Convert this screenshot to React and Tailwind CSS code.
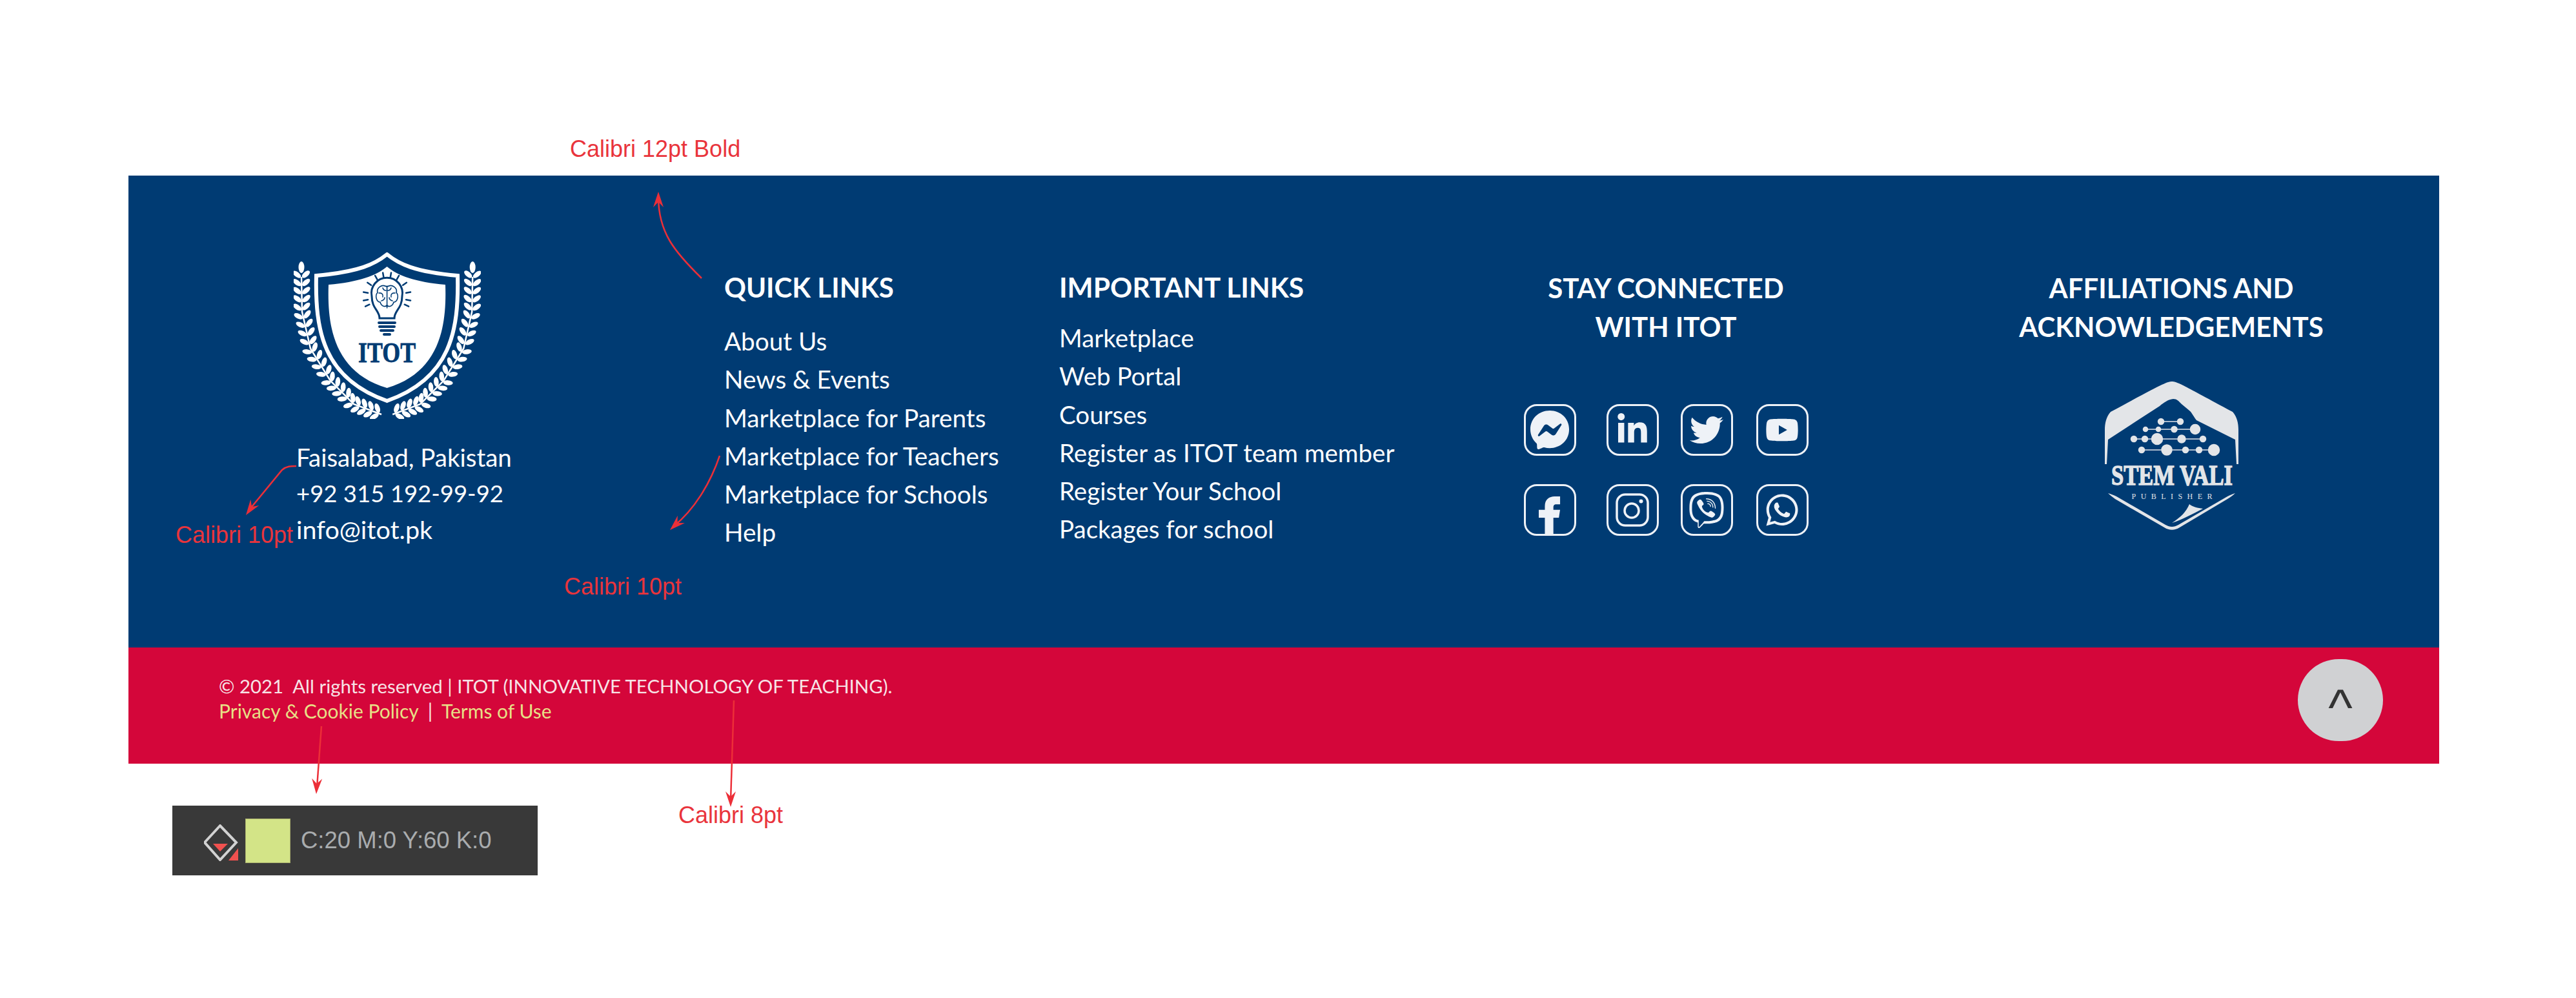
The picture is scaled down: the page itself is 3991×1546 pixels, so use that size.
import React from 'react';
import { FaFacebookMessenger, FaLinkedinIn, FaTwitter, FaYoutube, FaViber, FaWhatsapp } from 'react-icons/fa';

const quickLinks = ['About Us', 'News & Events', 'Marketplace for Parents', 'Marketplace for Teachers', 'Marketplace for Schools', 'Help'];
const importantLinks = ['Marketplace', 'Web Portal', 'Courses', 'Register as ITOT team member', 'Register Your School', 'Packages for school'];

// leaves of one laurel branch, sampled along the stem
const stem = [[12, 38], [13, 92], [26, 149], [57, 199], [93, 235], [136, 251]];
const pointOn = (t) => {
  const s = t * (stem.length - 1);
  const i = Math.min(Math.floor(s), stem.length - 2);
  const f = s - i;
  return [stem[i][0] + (stem[i + 1][0] - stem[i][0]) * f, stem[i][1] + (stem[i + 1][1] - stem[i][1]) * f];
};
const leaves = [];
for (let n = 0; n < 22; n++) {
  const t = n / 21.5;
  const [x, y] = pointOn(t);
  const [x2, y2] = pointOn(Math.min(t + 0.02, 1));
  const a = (Math.atan2(y2 - y, x2 - x) * 180) / Math.PI;
  leaves.push({ x, y, a });
}

const Laurel = () => (
  <g fill="white">
    <path d="M12 38 L13 92 L26 149 L57 199 L93 235 L136 251" fill="none" stroke="white" strokeWidth="2.5" />
    <ellipse cx="12" cy="23" rx="4.5" ry="9" />
    {leaves.map((l, i) => (
      <g key={i} transform={`translate(${l.x} ${l.y}) rotate(${l.a})`}>
        <ellipse cx="-4" cy="-7" rx="7.5" ry="3.8" transform="rotate(50 -4 -7)" />
        <ellipse cx="-4" cy="7" rx="7.5" ry="3.8" transform="rotate(-50 -4 7)" />
      </g>
    ))}
  </g>
);

const rays = [-170, -145, -120, -100, -80, -60, -35, -10, 10, 170, 25, 155];

const ItotLogo = () => (
  <svg width="290" height="258" viewBox="0 0 290 258" className="block">
    <Laurel />
    <g transform="translate(289.2 0) scale(-1 1)">
      <Laurel />
    </g>
    <path d="M144.6 3 C126 18 102 30 35 36 C33 120 45 195 144.6 230 C244 195 256 120 254 36 C187 30 163 18 144.6 3 Z" fill="none" stroke="white" strokeWidth="6" />
    <path d="M144.6 22 C128 36 100 46 54 50 C52 110 60 185 144.6 210 C229 185 237 110 235 50 C189 46 161 36 144.6 22 Z" fill="white" />
    {/* bulb */}
    <g fill="none" stroke="#003b73" strokeLinecap="round">
      <path d="M133 102 C133 90 121 87 121 68 A24 24 0 1 1 168 68 C168 87 156 90 156 102 Z" strokeWidth="3" />
      <path d="M132 109 H157 M133 115 H156 M135 121 H154" strokeWidth="4" />
      <path d="M140 127 H149" strokeWidth="4" />
      {rays.map((r) => (
        <line key={r} x1={144.6 + 30 * Math.cos((r * Math.PI) / 180)} y1={68 + 30 * Math.sin((r * Math.PI) / 180)} x2={144.6 + 37 * Math.cos((r * Math.PI) / 180)} y2={68 + 37 * Math.sin((r * Math.PI) / 180)} strokeWidth="2.5" />
      ))}
      <path d="M144.6 52 V86 M144 53 C136 48 128 56 130 62 C125 68 129 77 134 77 C136 84 142 85 144 82 M145 53 C153 48 161 56 159 62 C164 68 160 77 155 77 C153 84 147 85 145 82 M132 63 C137 62 139 66 138 69 M157 63 C152 62 150 66 151 69 M136 75 C139 74 141 72 141 70 M153 75 C150 74 148 72 148 70 M138 55 C139 58 141 59 143 59 M151 55 C150 58 148 59 146 59" strokeWidth="1.6" />
    </g>
    <text x="144.6" y="170" textAnchor="middle" textLength="89" lengthAdjust="spacingAndGlyphs" fill="#003b73" stroke="#003b73" strokeWidth="0.8" fontFamily="Liberation Serif" fontWeight="700" fontSize="44">ITOT</text>
  </svg>
);

const StemLogo = () => (
  <svg width="207" height="232" viewBox="0 0 207 232" className="block">
    <path d="M104 0 C112 0 120 5 198 47 C205 55 207 65 207 75 L207 128 L204 128 L202 90 L142 60 C136 52 134 47 131 45 L119 35 C114 30 112 27 106 27 C98 28 92 32 85 38 L54 58 L5 90 L3 128 L0 128 L0 75 C0 65 2 55 9 47 C87 5 96 0 104 0 Z" fill="#e3e5e8" />
    <g fill="#e3e5e8" stroke="#e3e5e8" strokeWidth="1.5">
      <line x1="87" y1="62" x2="117" y2="62" />
      <line x1="63" y1="74" x2="140" y2="74" />
      <line x1="45" y1="89" x2="152" y2="89" />
      <line x1="57" y1="106" x2="169" y2="106" />
      <circle cx="87" cy="62" r="4.5" />
      <circle cx="117" cy="62" r="4.5" />
      <circle cx="63" cy="74" r="3.5" />
      <circle cx="83" cy="74" r="3.5" />
      <circle cx="107.5" cy="74" r="4.5" />
      <circle cx="140" cy="74" r="7.5" />
      <circle cx="45" cy="89" r="4.5" />
      <circle cx="62" cy="89" r="4.5" />
      <circle cx="81" cy="89" r="8.5" />
      <circle cx="119" cy="89" r="6" />
      <circle cx="152" cy="89" r="4.5" />
      <circle cx="57" cy="106" r="4.5" />
      <circle cx="96" cy="106" r="8" />
      <circle cx="125" cy="106" r="4.5" />
      <circle cx="146" cy="106" r="4.5" />
      <circle cx="169" cy="106" r="8.5" />
    </g>
    <text transform="translate(104 160) scale(1 1.4)" textAnchor="middle" textLength="188" lengthAdjust="spacingAndGlyphs" fill="#e3e5e8" stroke="#e3e5e8" strokeWidth="1" fontFamily="Liberation Serif" fontWeight="700" fontSize="31">STEM VALI</text>
    <text x="104" y="182" textAnchor="middle" textLength="125" lengthAdjust="spacing" fill="#e3e5e8" fontFamily="Liberation Serif" fontSize="12">PUBLISHER</text>
    <path d="M5 173 C8 176 12 179 16 182 L92 226 C100 231 108 231 116 226 L190 182 C195 179 199 176 202 173 C198 174 194 176 190 178 L114 222 C107 226 101 226 94 222 L18 178 C14 176 9 174 5 173 Z" fill="#e3e5e8" />
    <path d="M104 219 C118 210 126 202 131 190 C136 194 144 196 152 197 C138 204 120 214 104 219 Z" fill="#e3e5e8" />
  </svg>
);

const Social = ({ children }) => (
  <div className="w-[81px] h-[80px] rounded-[20px] border-[3.5px] border-[#eef2f7] text-[#eef2f7] overflow-hidden flex items-center justify-center">
    {children}
  </div>
);

const head = (tipX, tipY, fromX, fromY) => {
  const a = Math.atan2(tipY - fromY, tipX - fromX);
  const p = (d, s) => `${tipX - d * Math.cos(a) - s * Math.sin(a)},${tipY - d * Math.sin(a) + s * Math.cos(a)}`;
  return [p(24, 8), p(16, 0), p(24, -8), `${tipX},${tipY}`].join(' ');
};

const Annotations = () => (
  <svg width="3991" height="1546" viewBox="0 0 3991 1546" className="absolute inset-0 pointer-events-none">
    <g fill="none" stroke="#ec2f38" strokeWidth="2.5">
      <path d="M1087 431 C1045 390 1020 360 1020 305" />
      <path d="M1115 706 C1100 750 1075 790 1044 815" />
      <path d="M459 722 C450 722 444 722 437 728 L386 790" />
      <path d="M498 1125 L491 1220" />
      <path d="M1137 1085 L1132 1240" />
    </g>
    <g fill="#ec2f38">
      <polygon points={head(1020, 297, 1020, 330)} />
      <polygon points={head(1038, 821, 1060, 800)} />
      <polygon points={head(381, 798, 395, 778)} />
      <polygon points={head(490, 1230, 491, 1210)} />
      <polygon points={head(1132, 1250, 1132, 1230)} />
    </g>
  </svg>
);

const Note = ({ className, children }) => (
  <span className={`absolute font-['Liberation_Sans'] text-[36px] leading-[40px] text-[#e9343c] whitespace-nowrap ${className}`}>{children}</span>
);

export default function App() {
  return (
    <div className="relative w-[3991px] h-[1546px] bg-white pt-[272px] pl-[199px] overflow-hidden font-['Lato',sans-serif]">
      <div className="w-[3580px]">
        {/* blue part */}
        <div className="h-[731px] bg-[#003b73] flex items-start pt-[119px] text-white">
          <div className="w-[923px] pl-[256px]">
            <ItotLogo />
            <div className="mt-[31px] pl-[4px] text-[38.500px] leading-[56px]">
              <p>Faisalabad, Pakistan</p>
              <p className="text-[36.500px]">+92 315 192-99-92</p>
              <p className="text-[39.500px]">info@itot.pk</p>
            </div>
          </div>

          <div className="w-[519px] pt-[24px]">
            <h3 className="text-[42px] leading-[60px] font-bold">QUICK LINKS</h3>
            <ul className="mt-[24px] text-[38.700px] leading-[59.3px]">
              {quickLinks.map((l) => <li key={l}>{l}</li>)}
            </ul>
          </div>

          <div className="w-[600px] pt-[24px]">
            <h3 className="text-[42.500px] leading-[60px] font-bold">IMPORTANT LINKS</h3>
            <ul className="mt-[19px] text-[38.500px] leading-[59.3px]">
              {importantLinks.map((l) => <li key={l}>{l}</li>)}
            </ul>
          </div>

          <div className="w-[680px] pt-[25px] flex flex-col items-center">
            <h3 className="text-[42px] leading-[60px] font-bold text-center">STAY CONNECTED<br />WITH ITOT</h3>
            <div className="mt-[90px] grid grid-cols-[128px_115px_117px_81px] gap-y-[44px]">
              <Social><FaFacebookMessenger size={62} className="shrink-0" /></Social>
              <Social><FaLinkedinIn size={52} className="shrink-0" /></Social>
              <Social><FaTwitter size={52} className="shrink-0" /></Social>
              <Social><FaYoutube size={52} className="shrink-0" /></Social>
              <Social>
                <svg width="34" height="74" viewBox="0 0 36 74" className="mt-[28px] shrink-0" fill="currentColor">
                  <path d="M10 74 V35 H0 V22 H10 V16 C10 5 17 0 26 0 H35 V13 H29 C25 13 24 15 24 18 V22 H35 L33 35 H24 V74 Z" />
                </svg>
              </Social>
              <Social>
                <svg width="52" height="52" viewBox="0 0 52 52" fill="none" stroke="currentColor" className="shrink-0">
                  <rect x="2" y="2" width="48" height="48" rx="13" strokeWidth="3.5" />
                  <circle cx="25" cy="27" r="11" strokeWidth="3.5" />
                  <circle cx="39.500" cy="12.500" r="3" fill="currentColor" stroke="none" />
                </svg>
              </Social>
              <Social><FaViber size={56} className="shrink-0" /></Social>
              <Social><FaWhatsapp size={56} className="shrink-0" /></Social>
            </div>
          </div>

          <div className="w-[600px] ml-[143px] pt-[25px] flex flex-col items-center">
            <h3 className="text-[42px] leading-[60px] font-bold text-center">AFFILIATIONS AND<br />ACKNOWLEDGEMENTS</h3>
            <div className="mt-[55px]"><StemLogo /></div>
          </div>
        </div>

        {/* red part */}
        <div className="h-[180px] bg-[#d4063a] flex items-start justify-between pl-[140px] pr-[87px]">
          <div className="mt-[40px] leading-[39px]">
            <p className="text-[29.400px] text-[#f7e3e6] whitespace-pre">© 2021  All rights reserved | ITOT (INNOVATIVE TECHNOLOGY OF TEACHING).</p>
            <p className="text-[30px] text-[#e8df86]">Privacy &amp; Cookie Policy <span className="mx-[7px] text-[#f7e3e6]">|</span> Terms of Use</p>
          </div>
          <div className="mt-[18px] w-[132px] h-[127px] rounded-full bg-[#d0d1d3] flex items-center justify-center text-[#333] text-[80px] leading-none font-['Liberation_Sans']">
            <span className="mt-[22px]">^</span>
          </div>
        </div>
      </div>

      {/* color swatch readout */}
      <div className="absolute left-[267px] top-[1248px] w-[566px] h-[108px] bg-[#393939] flex items-center pl-[49px]">
        <svg width="54" height="57" viewBox="0 0 54 57" className="mt-[6px]">
          <path d="M25 2 L1 28 L25 55 L50 28 Z" fill="none" stroke="#d2d2d2" strokeWidth="4" />
          <path d="M14 30 H37 L25 42 Z" fill="#f0514f" />
          <path d="M53 37 V56 H38 Z" fill="#f0514f" />
        </svg>
        <div className="ml-[10px] w-[70px] h-[69px] bg-[#d3e487] border border-[#aab06e]" />
        <span className="ml-[16px] font-['Liberation_Sans'] text-[36.500px] text-[#a9acae] whitespace-nowrap">C:20 M:0 Y:60 K:0</span>
      </div>

      <Annotations />
      <Note className="left-[883px] top-[211px]">Calibri 12pt Bold</Note>
      <Note className="left-[874px] top-[889px]">Calibri 10pt</Note>
      <Note className="left-[272px] top-[809px]">Calibri 10pt</Note>
      <Note className="left-[1051px] top-[1243px]">Calibri 8pt</Note>
    </div>
  );
}
